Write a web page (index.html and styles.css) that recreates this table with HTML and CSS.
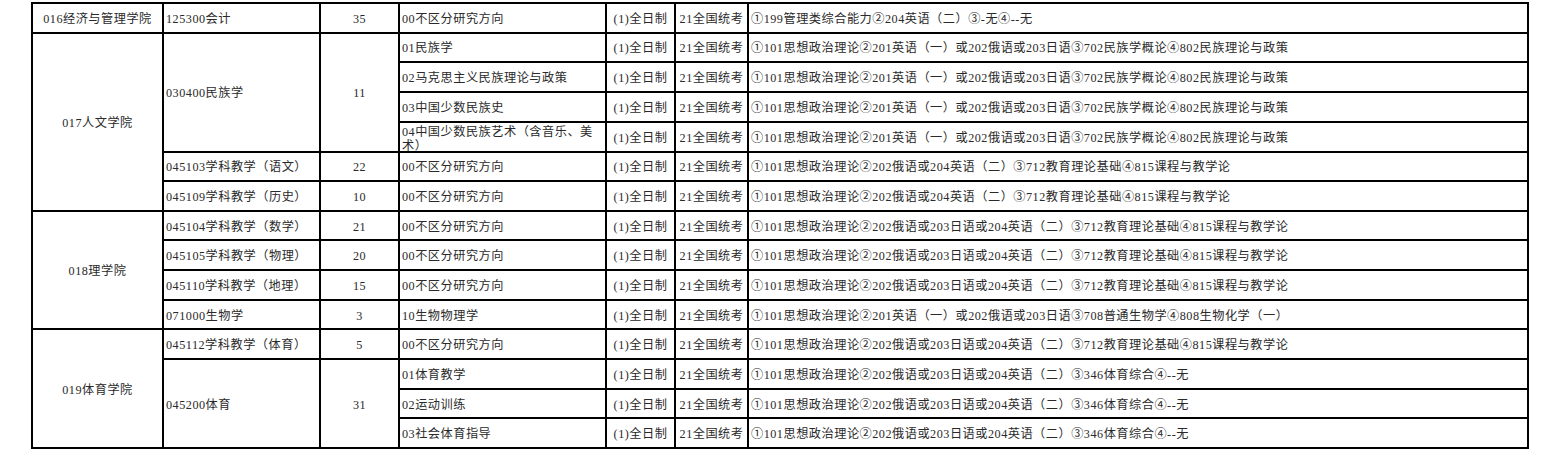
FILE: index.html
```html
<!DOCTYPE html>
<html lang="zh">
<head>
<meta charset="utf-8">
<link rel="stylesheet" href="styles.css">
</head>
<body>
<table class="plan">
<colgroup>
<col class="c-college"><col class="c-major"><col class="c-num"><col class="c-dir"><col class="c-mode"><col class="c-exam"><col class="c-subj">
</colgroup>
<tbody>
<tr><td class="center">016经济与管理学院</td><td>125300会计</td><td class="center">35</td><td>00不区分研究方向</td><td class="center">(1)全日制</td><td class="center">21全国统考</td><td>①199管理类综合能力②204英语（二）③-无④--无</td></tr>

<tr><td class="center" rowspan="6">017人文学院</td><td rowspan="4">030400民族学</td><td class="center" rowspan="4">11</td><td>01民族学</td><td class="center">(1)全日制</td><td class="center">21全国统考</td><td>①101思想政治理论②201英语（一）或202俄语或203日语③702民族学概论④802民族理论与政策</td></tr>
<tr><td>02马克思主义民族理论与政策</td><td class="center">(1)全日制</td><td class="center">21全国统考</td><td>①101思想政治理论②201英语（一）或202俄语或203日语③702民族学概论④802民族理论与政策</td></tr>
<tr><td>03中国少数民族史</td><td class="center">(1)全日制</td><td class="center">21全国统考</td><td>①101思想政治理论②201英语（一）或202俄语或203日语③702民族学概论④802民族理论与政策</td></tr>
<tr><td><div class="clip">04中国少数民族艺术（含音乐、美术）</div></td><td class="center">(1)全日制</td><td class="center">21全国统考</td><td>①101思想政治理论②201英语（一）或202俄语或203日语③702民族学概论④802民族理论与政策</td></tr>
<tr><td>045103学科教学（语文）</td><td class="center">22</td><td>00不区分研究方向</td><td class="center">(1)全日制</td><td class="center">21全国统考</td><td>①101思想政治理论②202俄语或204英语（二）③712教育理论基础④815课程与教学论</td></tr>
<tr><td>045109学科教学（历史）</td><td class="center">10</td><td>00不区分研究方向</td><td class="center">(1)全日制</td><td class="center">21全国统考</td><td>①101思想政治理论②202俄语或204英语（二）③712教育理论基础④815课程与教学论</td></tr>

<tr><td class="center" rowspan="4">018理学院</td><td>045104学科教学（数学）</td><td class="center">21</td><td>00不区分研究方向</td><td class="center">(1)全日制</td><td class="center">21全国统考</td><td>①101思想政治理论②202俄语或203日语或204英语（二）③712教育理论基础④815课程与教学论</td></tr>
<tr><td>045105学科教学（物理）</td><td class="center">20</td><td>00不区分研究方向</td><td class="center">(1)全日制</td><td class="center">21全国统考</td><td>①101思想政治理论②202俄语或203日语或204英语（二）③712教育理论基础④815课程与教学论</td></tr>
<tr><td>045110学科教学（地理）</td><td class="center">15</td><td>00不区分研究方向</td><td class="center">(1)全日制</td><td class="center">21全国统考</td><td>①101思想政治理论②202俄语或203日语或204英语（二）③712教育理论基础④815课程与教学论</td></tr>
<tr><td>071000生物学</td><td class="center">3</td><td>10生物物理学</td><td class="center">(1)全日制</td><td class="center">21全国统考</td><td>①101思想政治理论②201英语（一）或202俄语或203日语③708普通生物学④808生物化学（一）</td></tr>

<tr><td class="center" rowspan="4">019体育学院</td><td>045112学科教学（体育）</td><td class="center">5</td><td>00不区分研究方向</td><td class="center">(1)全日制</td><td class="center">21全国统考</td><td>①101思想政治理论②202俄语或203日语或204英语（二）③712教育理论基础④815课程与教学论</td></tr>
<tr><td rowspan="3">045200体育</td><td class="center" rowspan="3">31</td><td>01体育教学</td><td class="center">(1)全日制</td><td class="center">21全国统考</td><td>①101思想政治理论②202俄语或203日语或204英语（二）③346体育综合④--无</td></tr>
<tr><td>02运动训练</td><td class="center">(1)全日制</td><td class="center">21全国统考</td><td>①101思想政治理论②202俄语或203日语或204英语（二）③346体育综合④--无</td></tr>
<tr><td>03社会体育指导</td><td class="center">(1)全日制</td><td class="center">21全国统考</td><td>①101思想政治理论②202俄语或203日语或204英语（二）③346体育综合④--无</td></tr>
</tbody>
</table>
</body>
</html>
```
FILE: styles.css
```css
html, body {
  margin: 0;
  padding: 0;
  background: #fff;
}
body {
  padding: 2px 0 0 31px;
  font-family: "Liberation Serif", "Noto Sans CJK SC", serif;
  font-size: 12.2px;
  letter-spacing: 0.5px;
  color: #2a2a2a;
}
.plan {
  border-collapse: collapse;
  table-layout: fixed;
  width: 1498px;
  border: 2px solid #000;
}
.c-college { width: 131px; }
.c-major { width: 157px; }
.c-num { width: 79px; }
.c-dir { width: 207px; }
.c-mode { width: 69px; }
.c-exam { width: 73px; }
.c-subj { width: 780px; }
.plan td {
  border: 2px solid #000;
  height: 29.65px;
  padding: 2px 2px 0;
  vertical-align: middle;
  white-space: nowrap;
  line-height: 14px;
  overflow: hidden;
  box-sizing: border-box;
}
.plan td.center {
  text-align: center;
  padding: 2px 0 0;
}
.clip {
  white-space: normal;
  height: 26px;
  overflow: hidden;
  padding-top: 0;
  box-sizing: border-box;
}
```
